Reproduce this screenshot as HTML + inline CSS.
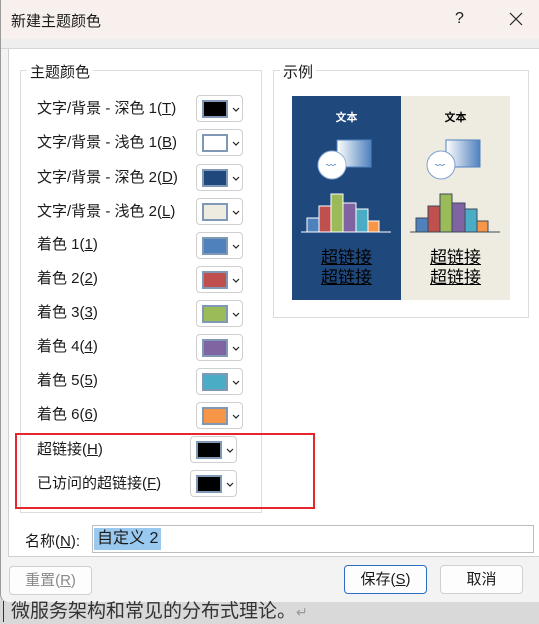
<!DOCTYPE html>
<html><head><meta charset="utf-8"><style>
*{margin:0;padding:0;box-sizing:border-box}
body{width:539px;height:622px;position:relative;overflow:hidden;background:#d9d9d9;font-family:"Liberation Sans","Noto Sans CJK SC",sans-serif;font-size:14px;color:#1a1a1a}
.abs{position:absolute}
.dlg{left:0;top:0;width:539px;height:602px;background:#f3f3f3;border-left:1px solid #9a9a9a;border-bottom-left-radius:8px}
.title{left:1px;top:0;width:538px;height:39px;background:#f7f0ec}
.strip{left:1px;top:39px;width:538px;height:10px;background:#eeeeee;border-bottom:1px solid #d6d6d6}
.panel{left:8px;top:49px;width:531px;height:508px;background:#fff;border-left:1px solid #d0d0d0;border-bottom:1px solid #d0d0d0}
.grp{border:1px solid #dcdcdc}
.leg{background:#fff;padding:0 3px;font-size:15px}
.lbl{left:37px;font-size:15px;line-height:18px}
.sw{left:196px;width:47px;height:27px;border:1px solid #cfcfcf;border-radius:4px;background:#fff}
.sw i{position:absolute;left:5px;top:4px;width:26px;height:18px;border:2px solid #7f98b5}
.sw svg{position:absolute;left:35px;top:11px}
u{text-decoration:underline}
.btn{height:29px;border:1px solid #d0d0d0;border-radius:4px;background:#fdfdfd;text-align:center;line-height:27px;font-size:15px}
</style></head><body>
<div class="abs dlg"></div>
<div class="abs title"></div>
<div class="abs" style="left:11px;top:10px;font-size:15px">新建主题颜色</div>
<div class="abs" style="left:455px;top:10px;font-size:16px">?</div>
<svg class="abs" style="left:509px;top:12px" width="14" height="14"><path d="M1 1L13 13M13 1L1 13" stroke="#222" stroke-width="1.2"/></svg>
<div class="abs strip"></div>
<div class="abs panel"></div>

<div class="abs grp" style="left:20px;top:70px;width:242px;height:443px"></div>
<div class="abs leg" style="left:27px;top:61px">主题颜色</div>

<div class="abs lbl" style="top:100px">文字/背景 - 深色 1(<u>T</u>)</div>
<div class="abs sw" style="top:95px"><i style="background:#000"></i><svg width="8" height="5"><path d="M1 1L4 4L7 1" stroke="#222" fill="none" stroke-width="1.2"/></svg></div>
<div class="abs lbl" style="top:134px">文字/背景 - 浅色 1(<u>B</u>)</div>
<div class="abs sw" style="top:129px"><i style="background:#fff"></i><svg width="8" height="5"><path d="M1 1L4 4L7 1" stroke="#222" fill="none" stroke-width="1.2"/></svg></div>
<div class="abs lbl" style="top:169px">文字/背景 - 深色 2(<u>D</u>)</div>
<div class="abs sw" style="top:164px"><i style="background:#1f497d"></i><svg width="8" height="5"><path d="M1 1L4 4L7 1" stroke="#222" fill="none" stroke-width="1.2"/></svg></div>
<div class="abs lbl" style="top:203px">文字/背景 - 浅色 2(<u>L</u>)</div>
<div class="abs sw" style="top:198px"><i style="background:#eeece1"></i><svg width="8" height="5"><path d="M1 1L4 4L7 1" stroke="#222" fill="none" stroke-width="1.2"/></svg></div>
<div class="abs lbl" style="top:236px">着色 1(<u>1</u>)</div>
<div class="abs sw" style="top:232px"><i style="background:#4f81bd"></i><svg width="8" height="5"><path d="M1 1L4 4L7 1" stroke="#222" fill="none" stroke-width="1.2"/></svg></div>
<div class="abs lbl" style="top:270px">着色 2(<u>2</u>)</div>
<div class="abs sw" style="top:266px"><i style="background:#c0504d"></i><svg width="8" height="5"><path d="M1 1L4 4L7 1" stroke="#222" fill="none" stroke-width="1.2"/></svg></div>
<div class="abs lbl" style="top:304px">着色 3(<u>3</u>)</div>
<div class="abs sw" style="top:300px"><i style="background:#9bbb59"></i><svg width="8" height="5"><path d="M1 1L4 4L7 1" stroke="#222" fill="none" stroke-width="1.2"/></svg></div>
<div class="abs lbl" style="top:338px">着色 4(<u>4</u>)</div>
<div class="abs sw" style="top:334px"><i style="background:#8064a2"></i><svg width="8" height="5"><path d="M1 1L4 4L7 1" stroke="#222" fill="none" stroke-width="1.2"/></svg></div>
<div class="abs lbl" style="top:372px">着色 5(<u>5</u>)</div>
<div class="abs sw" style="top:368px"><i style="background:#4bacc6"></i><svg width="8" height="5"><path d="M1 1L4 4L7 1" stroke="#222" fill="none" stroke-width="1.2"/></svg></div>
<div class="abs lbl" style="top:406px">着色 6(<u>6</u>)</div>
<div class="abs sw" style="top:402px"><i style="background:#f79646"></i><svg width="8" height="5"><path d="M1 1L4 4L7 1" stroke="#222" fill="none" stroke-width="1.2"/></svg></div>
<div class="abs lbl" style="top:441px">超链接(<u>H</u>)</div>
<div class="abs sw" style="top:436px;left:190px"><i style="background:#000"></i><svg width="8" height="5"><path d="M1 1L4 4L7 1" stroke="#222" fill="none" stroke-width="1.2"/></svg></div>
<div class="abs lbl" style="top:475px">已访问的超链接(<u>F</u>)</div>
<div class="abs sw" style="top:470px;left:190px"><i style="background:#000"></i><svg width="8" height="5"><path d="M1 1L4 4L7 1" stroke="#222" fill="none" stroke-width="1.2"/></svg></div>
<div class="abs" style="left:15px;top:433px;width:300px;height:76px;border:2px solid #e5262d"></div>

<div class="abs grp" style="left:273px;top:70px;width:256px;height:248px"></div>
<div class="abs leg" style="left:280px;top:61px">示例</div>
<svg class="abs" style="left:292px;top:96px" width="218" height="204">
<defs><linearGradient id="g"><stop offset="0" stop-color="#fff"/><stop offset="1" stop-color="#4f81bd"/></linearGradient></defs>
<rect x="0" y="0" width="109" height="204" fill="#1f497d"/>
<rect x="109" y="0" width="109" height="204" fill="#eeece1"/>
<g>
<rect x="45" y="44" width="34" height="27" fill="url(#g)" stroke="#4f81bd"/>
<circle cx="40" cy="69" r="14" fill="#fff" stroke="#95b3d7" stroke-width="1"/>
<path d="M34 69q1-1 2 0t2 0t2 0t2 0t2 0" stroke="#4f81bd" fill="none" stroke-width="0.8"/>
<g stroke="#fff" stroke-width="1">
<rect x="15" y="122" width="12" height="14" fill="#4f81bd"/><rect x="27" y="110" width="12" height="26" fill="#c0504d"/><rect x="39" y="98" width="12" height="38" fill="#9bbb59"/><rect x="51" y="107" width="13" height="29" fill="#8064a2"/><rect x="64" y="113" width="12" height="23" fill="#4bacc6"/><rect x="76" y="125" width="11" height="11" fill="#f79646"/>
<line x1="9" y1="136" x2="99" y2="136"/></g>
</g>
<g transform="translate(109,0)">
<rect x="45" y="44" width="34" height="27" fill="url(#g)" stroke="#4f81bd"/>
<circle cx="40" cy="69" r="14" fill="#fff" stroke="#7f9fcf" stroke-width="1"/>
<path d="M34 69q1-1 2 0t2 0t2 0t2 0t2 0" stroke="#4f81bd" fill="none" stroke-width="0.8"/>
<g stroke="#3c4a5c" stroke-width="1">
<rect x="15" y="122" width="12" height="14" fill="#4f81bd"/><rect x="27" y="110" width="12" height="26" fill="#c0504d"/><rect x="39" y="98" width="12" height="38" fill="#9bbb59"/><rect x="51" y="107" width="13" height="29" fill="#8064a2"/><rect x="64" y="113" width="12" height="23" fill="#4bacc6"/><rect x="76" y="125" width="11" height="11" fill="#f79646"/>
<line x1="9" y1="136" x2="99" y2="136"/></g>
</g>
</svg>
<div class="abs" style="left:292px;top:109px;width:109px;text-align:center;font-size:11px;font-weight:bold;color:#fff">文本</div>
<div class="abs" style="left:401px;top:109px;width:109px;text-align:center;font-size:11px;font-weight:bold;color:#000">文本</div>
<div class="abs" style="left:292px;top:248px;width:109px;text-align:center;font-size:17px;line-height:20px;color:#000"><u>超链接</u><br><u>超链接</u></div>
<div class="abs" style="left:401px;top:248px;width:109px;text-align:center;font-size:17px;line-height:20px;color:#000"><u>超链接</u><br><u>超链接</u></div>

<div class="abs" style="left:25px;top:530px;font-size:15px">名称(<u>N</u>):</div>
<div class="abs" style="left:92px;top:525px;width:442px;height:28px;border:1px solid #bdbdbd;background:#fff"></div>
<div class="abs" style="left:94px;top:528px;height:22px;padding:0 3px;background:#99c9ef;font-size:16px;line-height:22px">自定义 2</div>

<div class="abs btn" style="left:9px;top:566px;width:83px;color:#8a8a8a">重置(<u>R</u>)</div>
<div class="abs btn" style="left:344px;top:565px;width:83px;border:1px solid #2a6fc4">保存(<u>S</u>)</div>
<div class="abs btn" style="left:440px;top:565px;width:83px">取消</div>

<div class="abs" style="left:3px;top:601px;width:1px;height:21px;background:#333"></div>
<div class="abs" style="left:11px;top:600px;font-size:19px;color:#333;line-height:24px">微服务架构和常见的分布式理论。<span style="color:#999;font-size:14px">↵</span></div>
</body></html>
